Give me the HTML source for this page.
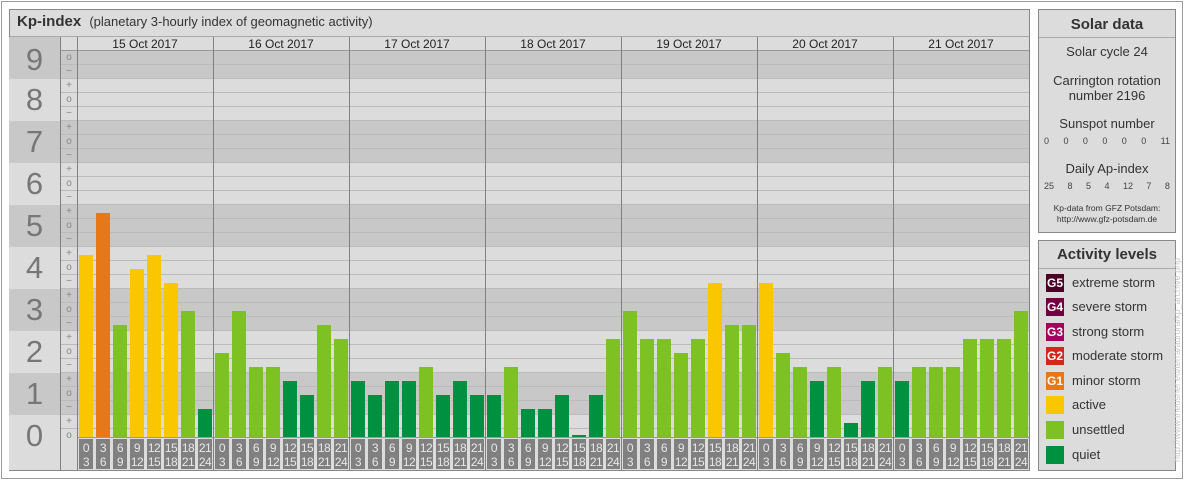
<!DOCTYPE html>
<html><head><meta charset="utf-8"><style>
*{margin:0;padding:0;box-sizing:border-box}
body{width:1184px;height:480px;background:#fff;font-family:"Liberation Sans",sans-serif;position:relative;overflow:hidden;color:#333}
.a{position:absolute}
.band{position:absolute;left:9px;width:1020px;height:42px}
.d{background:#c8c8c8}.l{background:#dcdcdc}
.num{position:absolute;left:9px;width:51px;height:42px;font-size:31px;color:#777;text-align:center;line-height:42px}
.tk{position:absolute;left:61px;width:16px;height:14px;font-size:10px;color:#888;text-align:center;line-height:14px}
.day{position:absolute;top:437px;width:136px;height:0;display:flex;align-items:flex-end}
.s{width:17px;position:relative;height:0}
.s i{position:absolute;left:2px;bottom:0;width:14px;display:block}
.Q{background:#009140}.U{background:#7dc122}.A{background:#f9c600}.G{background:#e67817}
.lab{position:absolute;top:439px;width:136px;display:flex}
.lab b{display:block;width:17px;padding-left:2px}
.lab b span{display:block;width:14px;height:30px;background:#808080;color:#e8e8e8;font-weight:normal;font-size:12px;line-height:14px;text-align:center;padding-top:2px;letter-spacing:-0.5px}
.vl{position:absolute;top:37px;width:1px;height:433px;background:#808080}
.dl{position:absolute;top:37px;width:136px;text-align:center;font-size:12px;color:#222;line-height:14px}
.sw{position:absolute;left:1046px;width:18px;height:18px;color:#fff;font-size:12px;font-weight:bold;line-height:18px;text-align:center}
.it{position:absolute;left:1072px;font-size:13px;color:#333}
.c{position:absolute;left:1039px;width:136px;text-align:center;color:#333}
</style></head><body>
<div class="a" style="left:1px;top:1px;width:1182px;height:478px;border:1px solid #999"></div>
<!-- main panel -->
<div class="a" style="left:9px;top:9px;width:1021px;height:462px;border:1px solid #888;background:#dcdcdc"></div>
<div class="a" style="left:10px;top:10px;width:1019px;height:27px;border-bottom:1px solid #aaa;background:#dcdcdc"></div>
<div class="a" style="left:17px;top:13px;font-size:15px;font-weight:bold;color:#333">Kp-index <span style="font-weight:normal;font-size:13px;margin-left:4px">(planetary 3-hourly index of geomagnetic activity)</span></div>
<!-- bands -->
<div class="band d" style="top:37px"></div>
<div class="band l" style="top:79px"></div>
<div class="band d" style="top:121px"></div>
<div class="band l" style="top:163px"></div>
<div class="band d" style="top:205px"></div>
<div class="band l" style="top:247px"></div>
<div class="band d" style="top:289px"></div>
<div class="band l" style="top:331px"></div>
<div class="band d" style="top:373px"></div>
<div class="band l" style="top:415px;height:55px"></div>
<div class="a" style="left:61px;top:37px;width:968px;height:14px;background:#dcdcdc;border-bottom:1px solid #999"></div>
<div class="a" style="left:61px;top:52px;width:968px;height:386px;background:repeating-linear-gradient(to bottom,transparent 0,transparent 12px,#bbb 12px,#bbb 13px,transparent 13px,transparent 14px)"></div>
<div class="a" style="left:61px;top:438px;width:16px;height:32px;background:#dcdcdc"></div>
<div class="a" style="left:77px;top:437px;width:952px;height:33px;background:#dcdcdc;border-top:1px solid #999"></div>
<div class="a" style="left:60px;top:37px;width:1px;height:433px;background:#808080"></div>
<!-- numbers -->
<div class="num" style="top:39px">9</div><div class="num" style="top:79px">8</div><div class="num" style="top:121px">7</div><div class="num" style="top:163px">6</div><div class="num" style="top:205px">5</div><div class="num" style="top:247px">4</div><div class="num" style="top:289px">3</div><div class="num" style="top:331px">2</div><div class="num" style="top:373px">1</div><div class="num" style="top:415px">0</div>
<!-- ticks -->
<div class="tk" style="top:51px">o</div><div class="tk" style="top:65px">−</div>
<div class="tk" style="top:79px">+</div><div class="tk" style="top:93px">o</div><div class="tk" style="top:107px">−</div>
<div class="tk" style="top:121px">+</div><div class="tk" style="top:135px">o</div><div class="tk" style="top:149px">−</div>
<div class="tk" style="top:163px">+</div><div class="tk" style="top:177px">o</div><div class="tk" style="top:191px">−</div>
<div class="tk" style="top:205px">+</div><div class="tk" style="top:219px">o</div><div class="tk" style="top:233px">−</div>
<div class="tk" style="top:247px">+</div><div class="tk" style="top:261px">o</div><div class="tk" style="top:275px">−</div>
<div class="tk" style="top:289px">+</div><div class="tk" style="top:303px">o</div><div class="tk" style="top:317px">−</div>
<div class="tk" style="top:331px">+</div><div class="tk" style="top:345px">o</div><div class="tk" style="top:359px">−</div>
<div class="tk" style="top:373px">+</div><div class="tk" style="top:387px">o</div><div class="tk" style="top:401px">−</div>
<div class="tk" style="top:415px">+</div><div class="tk" style="top:429px">o</div>
<!-- day lines & labels -->
<div class="vl" style="left:77px"></div><div class="vl" style="left:213px"></div><div class="vl" style="left:349px"></div><div class="vl" style="left:485px"></div><div class="vl" style="left:621px"></div><div class="vl" style="left:757px"></div><div class="vl" style="left:893px"></div><div class="vl" style="left:1029px"></div>
<div class="dl" style="left:77px">15 Oct 2017</div><div class="dl" style="left:213px">16 Oct 2017</div><div class="dl" style="left:349px">17 Oct 2017</div><div class="dl" style="left:485px">18 Oct 2017</div><div class="dl" style="left:621px">19 Oct 2017</div><div class="dl" style="left:757px">20 Oct 2017</div><div class="dl" style="left:893px">21 Oct 2017</div>
<!-- bars -->
<div class="day" style="left:77px"><div class="s"><i class="A" style="height:182px"></i></div><div class="s"><i class="G" style="height:224px"></i></div><div class="s"><i class="U" style="height:112px"></i></div><div class="s"><i class="A" style="height:168px"></i></div><div class="s"><i class="A" style="height:182px"></i></div><div class="s"><i class="A" style="height:154px"></i></div><div class="s"><i class="U" style="height:126px"></i></div><div class="s"><i class="Q" style="height:28px"></i></div></div>
<div class="day" style="left:213px"><div class="s"><i class="U" style="height:84px"></i></div><div class="s"><i class="U" style="height:126px"></i></div><div class="s"><i class="U" style="height:70px"></i></div><div class="s"><i class="U" style="height:70px"></i></div><div class="s"><i class="Q" style="height:56px"></i></div><div class="s"><i class="Q" style="height:42px"></i></div><div class="s"><i class="U" style="height:112px"></i></div><div class="s"><i class="U" style="height:98px"></i></div></div>
<div class="day" style="left:349px"><div class="s"><i class="Q" style="height:56px"></i></div><div class="s"><i class="Q" style="height:42px"></i></div><div class="s"><i class="Q" style="height:56px"></i></div><div class="s"><i class="Q" style="height:56px"></i></div><div class="s"><i class="U" style="height:70px"></i></div><div class="s"><i class="Q" style="height:42px"></i></div><div class="s"><i class="Q" style="height:56px"></i></div><div class="s"><i class="Q" style="height:42px"></i></div></div>
<div class="day" style="left:485px"><div class="s"><i class="Q" style="height:42px"></i></div><div class="s"><i class="U" style="height:70px"></i></div><div class="s"><i class="Q" style="height:28px"></i></div><div class="s"><i class="Q" style="height:28px"></i></div><div class="s"><i class="Q" style="height:42px"></i></div><div class="s"><i class="Q" style="height:2px"></i></div><div class="s"><i class="Q" style="height:42px"></i></div><div class="s"><i class="U" style="height:98px"></i></div></div>
<div class="day" style="left:621px"><div class="s"><i class="U" style="height:126px"></i></div><div class="s"><i class="U" style="height:98px"></i></div><div class="s"><i class="U" style="height:98px"></i></div><div class="s"><i class="U" style="height:84px"></i></div><div class="s"><i class="U" style="height:98px"></i></div><div class="s"><i class="A" style="height:154px"></i></div><div class="s"><i class="U" style="height:112px"></i></div><div class="s"><i class="U" style="height:112px"></i></div></div>
<div class="day" style="left:757px"><div class="s"><i class="A" style="height:154px"></i></div><div class="s"><i class="U" style="height:84px"></i></div><div class="s"><i class="U" style="height:70px"></i></div><div class="s"><i class="Q" style="height:56px"></i></div><div class="s"><i class="U" style="height:70px"></i></div><div class="s"><i class="Q" style="height:14px"></i></div><div class="s"><i class="Q" style="height:56px"></i></div><div class="s"><i class="U" style="height:70px"></i></div></div>
<div class="day" style="left:893px"><div class="s"><i class="Q" style="height:56px"></i></div><div class="s"><i class="U" style="height:70px"></i></div><div class="s"><i class="U" style="height:70px"></i></div><div class="s"><i class="U" style="height:70px"></i></div><div class="s"><i class="U" style="height:98px"></i></div><div class="s"><i class="U" style="height:98px"></i></div><div class="s"><i class="U" style="height:98px"></i></div><div class="s"><i class="U" style="height:126px"></i></div></div>
<!-- time labels -->
<div class="lab" style="left:77px"><b><span>0<br>3</span></b><b><span>3<br>6</span></b><b><span>6<br>9</span></b><b><span>9<br>12</span></b><b><span>12<br>15</span></b><b><span>15<br>18</span></b><b><span>18<br>21</span></b><b><span>21<br>24</span></b></div>
<div class="lab" style="left:213px"><b><span>0<br>3</span></b><b><span>3<br>6</span></b><b><span>6<br>9</span></b><b><span>9<br>12</span></b><b><span>12<br>15</span></b><b><span>15<br>18</span></b><b><span>18<br>21</span></b><b><span>21<br>24</span></b></div>
<div class="lab" style="left:349px"><b><span>0<br>3</span></b><b><span>3<br>6</span></b><b><span>6<br>9</span></b><b><span>9<br>12</span></b><b><span>12<br>15</span></b><b><span>15<br>18</span></b><b><span>18<br>21</span></b><b><span>21<br>24</span></b></div>
<div class="lab" style="left:485px"><b><span>0<br>3</span></b><b><span>3<br>6</span></b><b><span>6<br>9</span></b><b><span>9<br>12</span></b><b><span>12<br>15</span></b><b><span>15<br>18</span></b><b><span>18<br>21</span></b><b><span>21<br>24</span></b></div>
<div class="lab" style="left:621px"><b><span>0<br>3</span></b><b><span>3<br>6</span></b><b><span>6<br>9</span></b><b><span>9<br>12</span></b><b><span>12<br>15</span></b><b><span>15<br>18</span></b><b><span>18<br>21</span></b><b><span>21<br>24</span></b></div>
<div class="lab" style="left:757px"><b><span>0<br>3</span></b><b><span>3<br>6</span></b><b><span>6<br>9</span></b><b><span>9<br>12</span></b><b><span>12<br>15</span></b><b><span>15<br>18</span></b><b><span>18<br>21</span></b><b><span>21<br>24</span></b></div>
<div class="lab" style="left:893px"><b><span>0<br>3</span></b><b><span>3<br>6</span></b><b><span>6<br>9</span></b><b><span>9<br>12</span></b><b><span>12<br>15</span></b><b><span>15<br>18</span></b><b><span>18<br>21</span></b><b><span>21<br>24</span></b></div>
<div class="a" style="left:9px;top:470px;width:1021px;height:1px;background:#888"></div>
<!-- Solar data -->
<div class="a" style="left:1038px;top:9px;width:138px;height:224px;border:1px solid #888;background:#dcdcdc"></div>
<div class="a" style="left:1039px;top:10px;width:136px;height:28px;border-bottom:1px solid #aaa"></div>
<div class="c" style="top:16px;font-size:15px;font-weight:bold">Solar data</div>
<div class="c" style="top:44px;font-size:13px">Solar cycle 24</div>
<div class="c" style="top:73px;font-size:13px;line-height:15px">Carrington rotation<br>number 2196</div>
<div class="c" style="top:116px;font-size:13px">Sunspot number</div>
<div class="a" style="left:1044px;top:136px;width:126px;display:flex;justify-content:space-between;font-size:9px;color:#444"><span>0</span><span>0</span><span>0</span><span>0</span><span>0</span><span>0</span><span>11</span></div>
<div class="c" style="top:161px;font-size:13px">Daily Ap-index</div>
<div class="a" style="left:1044px;top:181px;width:126px;display:flex;justify-content:space-between;font-size:9px;color:#444"><span>25</span><span>8</span><span>5</span><span>4</span><span>12</span><span>7</span><span>8</span></div>
<div class="c" style="top:203px;font-size:8.5px;line-height:11px">Kp-data from GFZ Potsdam:<br>http://www.gfz-potsdam.de</div>
<!-- Activity levels -->
<div class="a" style="left:1038px;top:240px;width:138px;height:231px;border:1px solid #888;background:#dcdcdc"></div>
<div class="a" style="left:1039px;top:241px;width:136px;height:28px;border-bottom:1px solid #aaa"></div>
<div class="c" style="top:246px;font-size:15px;font-weight:bold">Activity levels</div>
<div class="sw" style="top:274px;background:#4c0026">G5</div><div class="it" style="top:275px">extreme storm</div>
<div class="sw" style="top:298px;background:#720040">G4</div><div class="it" style="top:299px">severe storm</div>
<div class="sw" style="top:323px;background:#a8005e">G3</div><div class="it" style="top:324px">strong storm</div>
<div class="sw" style="top:347px;background:#d4261e">G2</div><div class="it" style="top:348px">moderate storm</div>
<div class="sw" style="top:372px;background:#e67817">G1</div><div class="it" style="top:373px">minor storm</div>
<div class="sw" style="top:396px;background:#f9c600"></div><div class="it" style="top:397px">active</div>
<div class="sw" style="top:421px;background:#7dc122"></div><div class="it" style="top:422px">unsettled</div>
<div class="sw" style="top:446px;background:#009140"></div><div class="it" style="top:447px">quiet</div>
<div class="a" style="left:1172px;top:462px;width:230px;font-size:9px;color:#c8c8c8;transform-origin:0 0;transform:rotate(-90deg);white-space:nowrap">http://www.theusner.eu/terra/aurora/kp_archive.php</div>
</body></html>
